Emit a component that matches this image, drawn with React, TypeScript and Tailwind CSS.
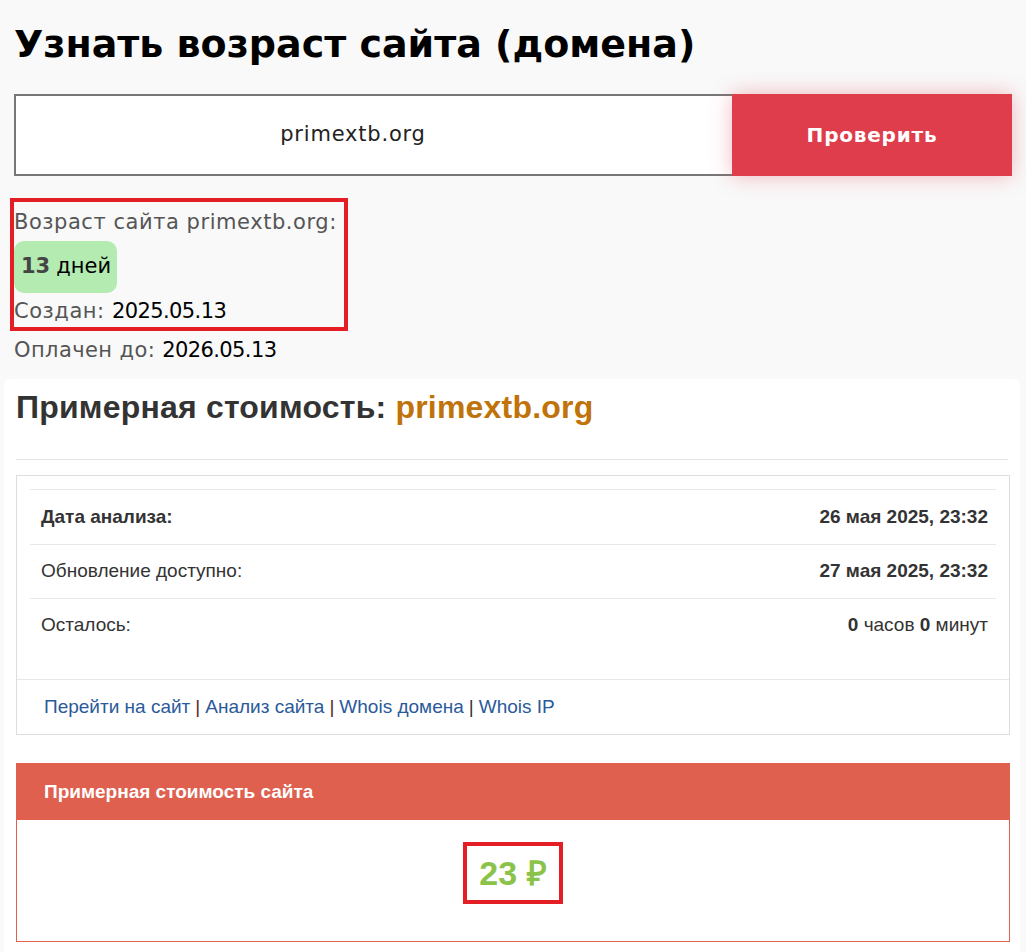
import React from "react";

const mont = { fontFamily: '"DejaVu Sans", "Noto Sans", sans-serif' };

export default function App() {
  return (
    <div className="min-h-[952px] bg-[#f9f9f9]">
      <div className="px-[14px] pt-[14px]" style={mont}>
        <h1 className="text-[38px] font-bold leading-[60px] text-black">Узнать возраст сайта (домена)</h1>
        <div className="mt-[20px] flex h-[82px] w-[998px]">
          <div className="flex flex-1 items-center justify-center border-2 border-r-0 border-[#777] bg-white pr-[42px] text-[21px] tracking-[0.8px] text-[#222]">
            primextb.org
          </div>
          <button className="w-[280px] bg-[#df3c4c] text-[20px] font-bold tracking-[0.8px] text-white shadow-[0_0_20px_rgba(223,60,76,0.35)]">
            Проверить
          </button>
        </div>
        <div className="mt-[22px] -ml-[4px] inline-flex flex-col border-4 border-[#e31e24] pr-[7px] pb-[2px] pt-[6px] tracking-[0.55px]">
          <div className="text-[21px] leading-[28px] text-[#555]">Возраст сайта primextb.org:</div>
          <div className="mt-[5px] inline-flex h-[52px] w-[103px] items-center rounded-[10px] bg-[#b3ebb0] pl-[7px] text-[21px] tracking-[0px]">
            <span className="font-bold text-[#444]">13</span>
            <span className="ml-[6px] text-black">дней</span>
          </div>
          <div className="mt-[4px] text-[21px] leading-[28px] text-[#555]">
            Создан: <span className="tracking-[-0.6px] text-black">2025.05.13</span>
          </div>
        </div>
        <div className="mt-[5px] text-[21px] leading-[28px] tracking-[0.4px] text-[#555]">
          Оплачен до: <span className="tracking-[-0.6px] text-black">2026.05.13</span>
        </div>
      </div>
      <div
        className="ml-[4px] mr-[6px] mt-[15px] rounded-t-[6px] bg-white px-[12px] pb-[12px]"
        style={{ fontFamily: '"Liberation Sans", Arial, sans-serif' }}
      >
        <h2 className="pt-[8px] text-[32px] font-bold leading-[40px] tracking-[0.2px] text-[#333]">
          Примерная стоимость: <span className="text-[#c0730a]">primextb.org</span>
        </h2>
        <div className="mt-[32px] border-t border-[#e5e5e5]" />
        <div className="mt-[15px] mr-[-2px] border border-[#ddd]">
          <div className="mx-[13px] mt-[13px] text-[19px] text-[#333]">
            <div className="flex h-[55px] items-center justify-between border-t border-[#e8e8e8] pl-[11px] pr-[8px]">
              <span className="font-bold">Дата анализа:</span>
              <span className="font-bold">26 мая 2025, 23:32</span>
            </div>
            <div className="flex h-[54px] items-center justify-between border-t border-[#e8e8e8] pl-[11px] pr-[8px]">
              <span>Обновление доступно:</span>
              <span className="font-bold">27 мая 2025, 23:32</span>
            </div>
            <div className="flex h-[54px] items-center justify-between border-t border-[#e8e8e8] pl-[11px] pr-[8px]">
              <span>Осталось:</span>
              <span>
                <b>0</b> часов <b>0</b> минут
              </span>
            </div>
          </div>
          <div className="mt-[27px] flex h-[55px] items-center border-t border-[#e8e8e8] px-[27px] text-[19px] text-[#2a5a9a]">
            <span>Перейти на сайт</span>
            <span className="mx-[5px] text-[#5a2a2a]">|</span>
            <span>Анализ сайта</span>
            <span className="mx-[5px] text-[#5a2a2a]">|</span>
            <span>Whois домена</span>
            <span className="mx-[5px] text-[#333]">|</span>
            <span>Whois IP</span>
          </div>
        </div>
        <div className="mt-[28px] mr-[-2px] border border-[#e06050]">
          <div className="flex h-[56px] items-center bg-[#e06050] px-[27px] text-[19px] font-bold text-white">
            Примерная стоимость сайта
          </div>
          <div className="flex h-[121px] items-start justify-center pt-[22px]">
            <div className="border-4 border-[#e31e24] px-[12px] py-[7px] text-[34px] font-bold leading-[40px] text-[#8bc34a]">
              23 ₽
            </div>
          </div>
        </div>
      </div>
    </div>
  );
}
